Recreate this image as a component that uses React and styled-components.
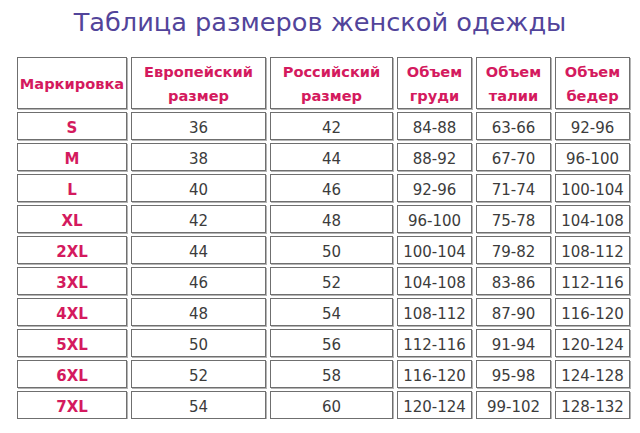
import React from 'react'
import styled, { createGlobalStyle } from 'styled-components'

const GlobalStyle = createGlobalStyle`
  html, body {
    margin: 0;
    padding: 0;
    background: #ffffff;
  }
  body {
    font-family: 'DejaVu Sans', Verdana, sans-serif;
  }
`

const Page = styled.div`
  width: 640px;
  height: 433px;
  overflow: hidden;
  background: #fff;
`

const Title = styled.h1`
  margin: 0;
  padding-top: 5px;
  height: 57px;
  box-sizing: border-box;
  text-align: center;
  font-family: 'DejaVu Sans', Verdana, sans-serif;
  font-weight: normal;
  font-size: 25.6px;
  line-height: 34px;
  color: #52449a;
`

const TableClip = styled.div`
  margin-left: 17px;
  height: 362px;
  overflow: hidden;
`

const Grid = styled.div`
  display: grid;
  grid-template-columns: 110px 135px 123px 75px 75px 75px;
  grid-template-rows: 52px;
  grid-auto-rows: 28px;
  column-gap: 4px;
  row-gap: 3px;
`

const Cell = styled.div`
  box-sizing: border-box;
  border: 1px solid #6f6f6f;
  box-shadow: 1px 1px 0 #b4b4b4;
  display: flex;
  align-items: center;
  justify-content: center;
  text-align: center;
  color: ${p => (p.$accent ? '#d41a5e' : '#3c3c3c')};
  font-weight: ${p => (p.$accent ? 'bold' : 'normal')};
  font-size: ${p => (p.$head ? '14.6px' : '15px')};
  line-height: ${p => (p.$head ? '24px' : '20px')};
  padding-top: ${p => (p.$head ? '1px' : '3px')};
  white-space: nowrap;
`

const headers = [
  ['Маркировка'],
  ['Европейский', 'размер'],
  ['Российский', 'размер'],
  ['Объем', 'груди'],
  ['Объем', 'талии'],
  ['Объем', 'бедер']
]

const rows = [
  ['S', '36', '42', '84-88', '63-66', '92-96'],
  ['M', '38', '44', '88-92', '67-70', '96-100'],
  ['L', '40', '46', '92-96', '71-74', '100-104'],
  ['XL', '42', '48', '96-100', '75-78', '104-108'],
  ['2XL', '44', '50', '100-104', '79-82', '108-112'],
  ['3XL', '46', '52', '104-108', '83-86', '112-116'],
  ['4XL', '48', '54', '108-112', '87-90', '116-120'],
  ['5XL', '50', '56', '112-116', '91-94', '120-124'],
  ['6XL', '52', '58', '116-120', '95-98', '124-128'],
  ['7XL', '54', '60', '120-124', '99-102', '128-132']
]

const App = () => (
  <Page>
    <GlobalStyle />
    <Title>Таблица размеров женской одежды</Title>
    <TableClip>
      <Grid>
        {headers.map((lines, i) => (
          <Cell key={'h' + i} $accent $head>
            <div>
              {lines.map(l => (
                <div key={l}>{l}</div>
              ))}
            </div>
          </Cell>
        ))}
        {rows.map(row =>
          row.map((value, i) => (
            <Cell key={row[0] + i} $accent={i === 0}>
              {value}
            </Cell>
          ))
        )}
      </Grid>
    </TableClip>
  </Page>
)

export default App
